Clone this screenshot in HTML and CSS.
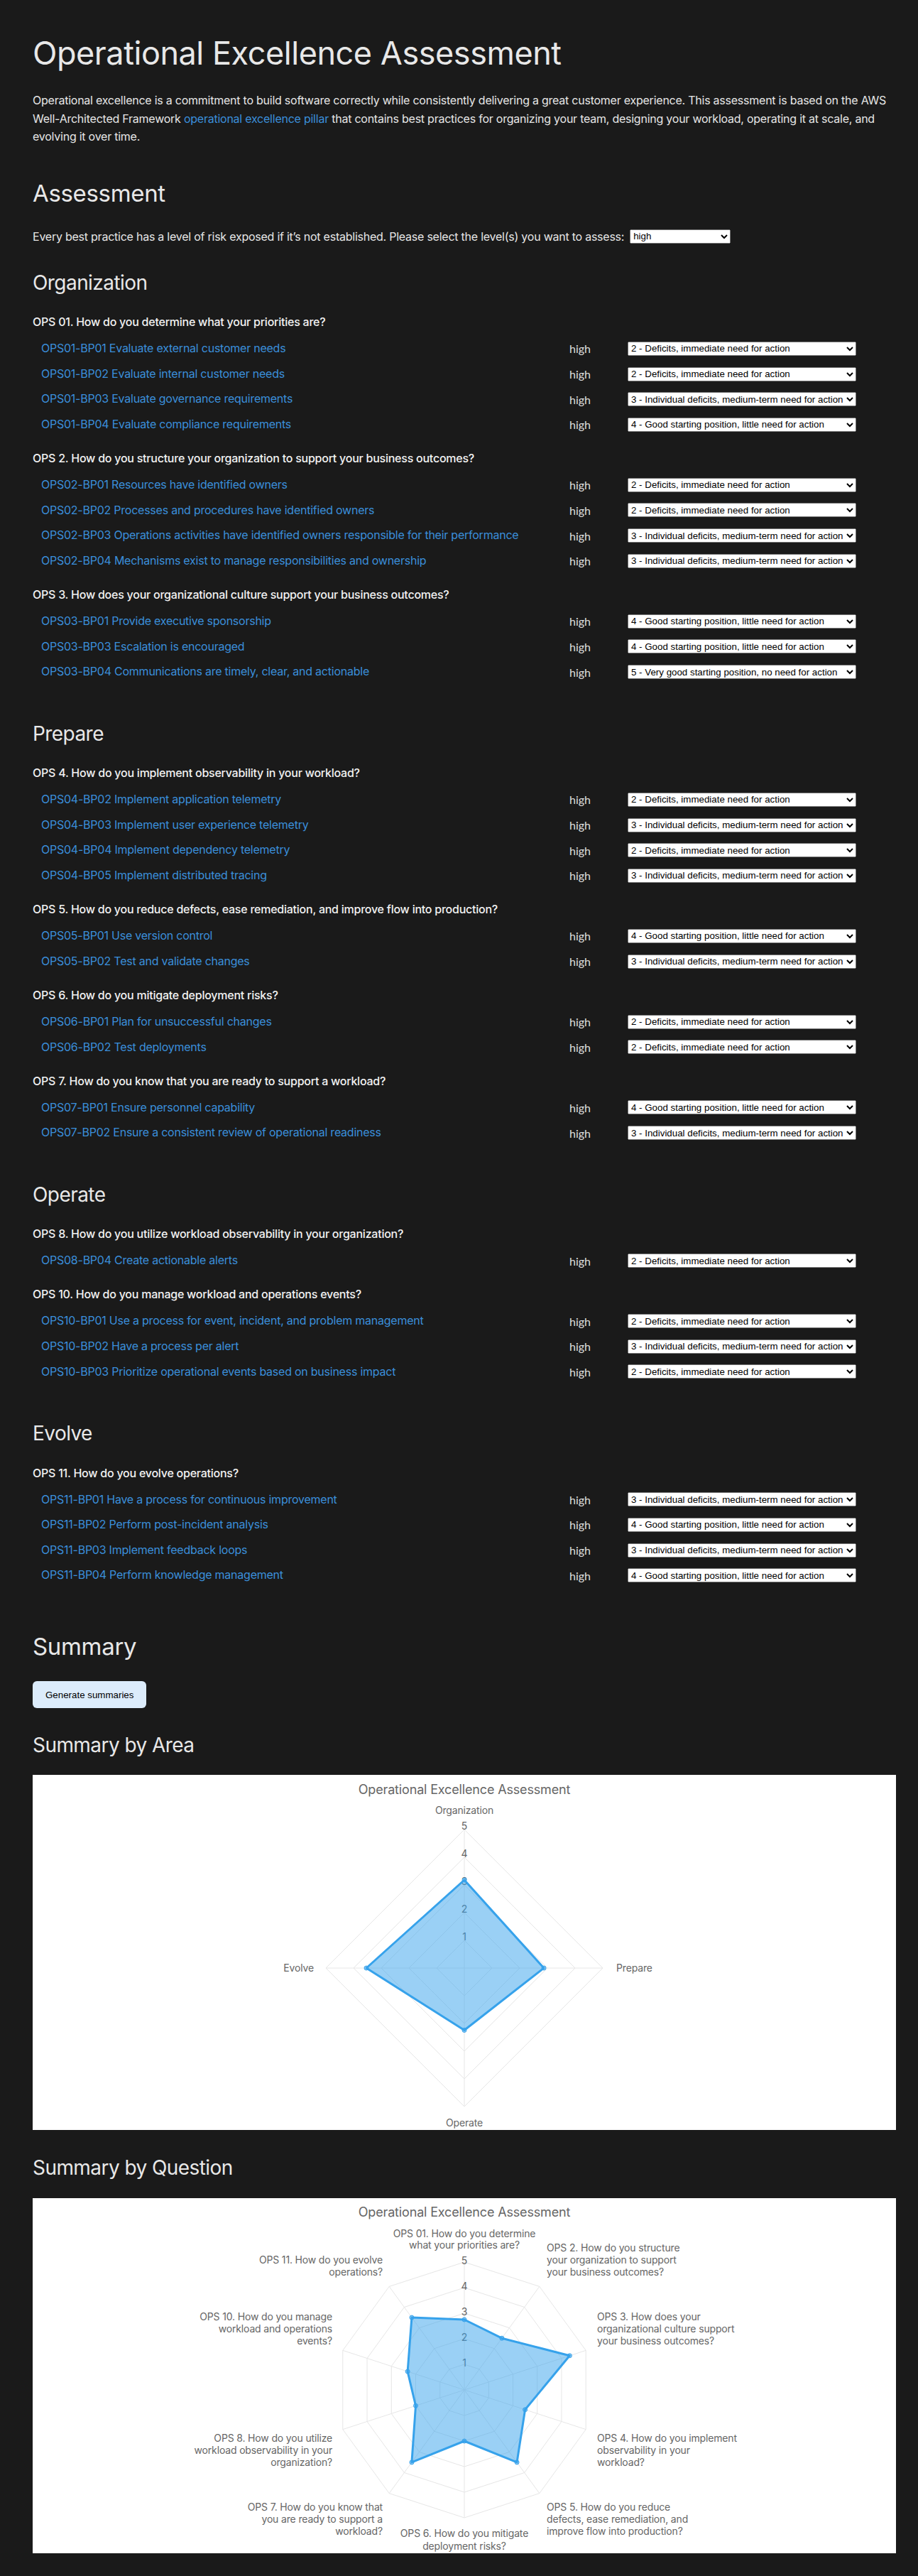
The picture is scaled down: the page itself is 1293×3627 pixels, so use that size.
FILE: index.html
```html
<!DOCTYPE html>
<html lang="en">
<head>
<meta charset="utf-8">
<title>Operational Excellence Assessment</title>
<link rel="stylesheet" href="styles.css">
</head>
<body>
<main class="page">
  <h1 class="title">Operational Excellence Assessment</h1>
  <p class="intro">Operational excellence is a commitment to build software correctly while consistently delivering a great customer experience. This assessment is based on the AWS Well-Architected Framework <a href="#">operational excellence pillar</a> that contains best practices for organizing your team, designing your workload, operating it at scale, and evolving it over time.</p>

  <section class="assessment">
    <h2 class="section-title">Assessment</h2>
    <p class="risk-filter">Every best practice has a level of risk exposed if it’s not established. Please select the level(s) you want to assess: <select class="risk-select"><option selected>high</option><option>medium</option><option>low</option></select></p>

    <section class="area">
      <h3 class="area-title">Organization</h3>
      <div class="question">
        <h4 class="q-title">OPS 01. How do you determine what your priorities are?</h4>
        <div class="bp-row"><a href="#">OPS01-BP01 Evaluate external customer needs</a><span class="risk">high</span><select class="score"><option selected>2 - Deficits, immediate need for action</option><option>3 - Individual deficits, medium-term need for action</option><option>4 - Good starting position, little need for action</option><option>5 - Very good starting position, no need for action</option></select></div>
        <div class="bp-row"><a href="#">OPS01-BP02 Evaluate internal customer needs</a><span class="risk">high</span><select class="score"><option selected>2 - Deficits, immediate need for action</option><option>3 - Individual deficits, medium-term need for action</option><option>4 - Good starting position, little need for action</option><option>5 - Very good starting position, no need for action</option></select></div>
        <div class="bp-row"><a href="#">OPS01-BP03 Evaluate governance requirements</a><span class="risk">high</span><select class="score"><option>2 - Deficits, immediate need for action</option><option selected>3 - Individual deficits, medium-term need for action</option><option>4 - Good starting position, little need for action</option><option>5 - Very good starting position, no need for action</option></select></div>
        <div class="bp-row"><a href="#">OPS01-BP04 Evaluate compliance requirements</a><span class="risk">high</span><select class="score"><option>2 - Deficits, immediate need for action</option><option>3 - Individual deficits, medium-term need for action</option><option selected>4 - Good starting position, little need for action</option><option>5 - Very good starting position, no need for action</option></select></div>
      </div>
      <div class="question">
        <h4 class="q-title">OPS 2. How do you structure your organization to support your business outcomes?</h4>
        <div class="bp-row"><a href="#">OPS02-BP01 Resources have identified owners</a><span class="risk">high</span><select class="score"><option selected>2 - Deficits, immediate need for action</option><option>3 - Individual deficits, medium-term need for action</option><option>4 - Good starting position, little need for action</option><option>5 - Very good starting position, no need for action</option></select></div>
        <div class="bp-row"><a href="#">OPS02-BP02 Processes and procedures have identified owners</a><span class="risk">high</span><select class="score"><option selected>2 - Deficits, immediate need for action</option><option>3 - Individual deficits, medium-term need for action</option><option>4 - Good starting position, little need for action</option><option>5 - Very good starting position, no need for action</option></select></div>
        <div class="bp-row"><a href="#">OPS02-BP03 Operations activities have identified owners responsible for their performance</a><span class="risk">high</span><select class="score"><option>2 - Deficits, immediate need for action</option><option selected>3 - Individual deficits, medium-term need for action</option><option>4 - Good starting position, little need for action</option><option>5 - Very good starting position, no need for action</option></select></div>
        <div class="bp-row"><a href="#">OPS02-BP04 Mechanisms exist to manage responsibilities and ownership</a><span class="risk">high</span><select class="score"><option>2 - Deficits, immediate need for action</option><option selected>3 - Individual deficits, medium-term need for action</option><option>4 - Good starting position, little need for action</option><option>5 - Very good starting position, no need for action</option></select></div>
      </div>
      <div class="question">
        <h4 class="q-title">OPS 3. How does your organizational culture support your business outcomes?</h4>
        <div class="bp-row"><a href="#">OPS03-BP01 Provide executive sponsorship</a><span class="risk">high</span><select class="score"><option>2 - Deficits, immediate need for action</option><option>3 - Individual deficits, medium-term need for action</option><option selected>4 - Good starting position, little need for action</option><option>5 - Very good starting position, no need for action</option></select></div>
        <div class="bp-row"><a href="#">OPS03-BP03 Escalation is encouraged</a><span class="risk">high</span><select class="score"><option>2 - Deficits, immediate need for action</option><option>3 - Individual deficits, medium-term need for action</option><option selected>4 - Good starting position, little need for action</option><option>5 - Very good starting position, no need for action</option></select></div>
        <div class="bp-row"><a href="#">OPS03-BP04 Communications are timely, clear, and actionable</a><span class="risk">high</span><select class="score"><option>2 - Deficits, immediate need for action</option><option>3 - Individual deficits, medium-term need for action</option><option>4 - Good starting position, little need for action</option><option selected>5 - Very good starting position, no need for action</option></select></div>
      </div>
    </section>

    <section class="area">
      <h3 class="area-title">Prepare</h3>
      <div class="question">
        <h4 class="q-title">OPS 4. How do you implement observability in your workload?</h4>
        <div class="bp-row"><a href="#">OPS04-BP02 Implement application telemetry</a><span class="risk">high</span><select class="score"><option selected>2 - Deficits, immediate need for action</option><option>3 - Individual deficits, medium-term need for action</option><option>4 - Good starting position, little need for action</option><option>5 - Very good starting position, no need for action</option></select></div>
        <div class="bp-row"><a href="#">OPS04-BP03 Implement user experience telemetry</a><span class="risk">high</span><select class="score"><option>2 - Deficits, immediate need for action</option><option selected>3 - Individual deficits, medium-term need for action</option><option>4 - Good starting position, little need for action</option><option>5 - Very good starting position, no need for action</option></select></div>
        <div class="bp-row"><a href="#">OPS04-BP04 Implement dependency telemetry</a><span class="risk">high</span><select class="score"><option selected>2 - Deficits, immediate need for action</option><option>3 - Individual deficits, medium-term need for action</option><option>4 - Good starting position, little need for action</option><option>5 - Very good starting position, no need for action</option></select></div>
        <div class="bp-row"><a href="#">OPS04-BP05 Implement distributed tracing</a><span class="risk">high</span><select class="score"><option>2 - Deficits, immediate need for action</option><option selected>3 - Individual deficits, medium-term need for action</option><option>4 - Good starting position, little need for action</option><option>5 - Very good starting position, no need for action</option></select></div>
      </div>
      <div class="question">
        <h4 class="q-title">OPS 5. How do you reduce defects, ease remediation, and improve flow into production?</h4>
        <div class="bp-row"><a href="#">OPS05-BP01 Use version control</a><span class="risk">high</span><select class="score"><option>2 - Deficits, immediate need for action</option><option>3 - Individual deficits, medium-term need for action</option><option selected>4 - Good starting position, little need for action</option><option>5 - Very good starting position, no need for action</option></select></div>
        <div class="bp-row"><a href="#">OPS05-BP02 Test and validate changes</a><span class="risk">high</span><select class="score"><option>2 - Deficits, immediate need for action</option><option selected>3 - Individual deficits, medium-term need for action</option><option>4 - Good starting position, little need for action</option><option>5 - Very good starting position, no need for action</option></select></div>
      </div>
      <div class="question">
        <h4 class="q-title">OPS 6. How do you mitigate deployment risks?</h4>
        <div class="bp-row"><a href="#">OPS06-BP01 Plan for unsuccessful changes</a><span class="risk">high</span><select class="score"><option selected>2 - Deficits, immediate need for action</option><option>3 - Individual deficits, medium-term need for action</option><option>4 - Good starting position, little need for action</option><option>5 - Very good starting position, no need for action</option></select></div>
        <div class="bp-row"><a href="#">OPS06-BP02 Test deployments</a><span class="risk">high</span><select class="score"><option selected>2 - Deficits, immediate need for action</option><option>3 - Individual deficits, medium-term need for action</option><option>4 - Good starting position, little need for action</option><option>5 - Very good starting position, no need for action</option></select></div>
      </div>
      <div class="question">
        <h4 class="q-title">OPS 7. How do you know that you are ready to support a workload?</h4>
        <div class="bp-row"><a href="#">OPS07-BP01 Ensure personnel capability</a><span class="risk">high</span><select class="score"><option>2 - Deficits, immediate need for action</option><option>3 - Individual deficits, medium-term need for action</option><option selected>4 - Good starting position, little need for action</option><option>5 - Very good starting position, no need for action</option></select></div>
        <div class="bp-row"><a href="#">OPS07-BP02 Ensure a consistent review of operational readiness</a><span class="risk">high</span><select class="score"><option>2 - Deficits, immediate need for action</option><option selected>3 - Individual deficits, medium-term need for action</option><option>4 - Good starting position, little need for action</option><option>5 - Very good starting position, no need for action</option></select></div>
      </div>
    </section>

    <section class="area">
      <h3 class="area-title">Operate</h3>
      <div class="question">
        <h4 class="q-title">OPS 8. How do you utilize workload observability in your organization?</h4>
        <div class="bp-row"><a href="#">OPS08-BP04 Create actionable alerts</a><span class="risk">high</span><select class="score"><option selected>2 - Deficits, immediate need for action</option><option>3 - Individual deficits, medium-term need for action</option><option>4 - Good starting position, little need for action</option><option>5 - Very good starting position, no need for action</option></select></div>
      </div>
      <div class="question">
        <h4 class="q-title">OPS 10. How do you manage workload and operations events?</h4>
        <div class="bp-row"><a href="#">OPS10-BP01 Use a process for event, incident, and problem management</a><span class="risk">high</span><select class="score"><option selected>2 - Deficits, immediate need for action</option><option>3 - Individual deficits, medium-term need for action</option><option>4 - Good starting position, little need for action</option><option>5 - Very good starting position, no need for action</option></select></div>
        <div class="bp-row"><a href="#">OPS10-BP02 Have a process per alert</a><span class="risk">high</span><select class="score"><option>2 - Deficits, immediate need for action</option><option selected>3 - Individual deficits, medium-term need for action</option><option>4 - Good starting position, little need for action</option><option>5 - Very good starting position, no need for action</option></select></div>
        <div class="bp-row"><a href="#">OPS10-BP03 Prioritize operational events based on business impact</a><span class="risk">high</span><select class="score"><option selected>2 - Deficits, immediate need for action</option><option>3 - Individual deficits, medium-term need for action</option><option>4 - Good starting position, little need for action</option><option>5 - Very good starting position, no need for action</option></select></div>
      </div>
    </section>

    <section class="area">
      <h3 class="area-title">Evolve</h3>
      <div class="question">
        <h4 class="q-title">OPS 11. How do you evolve operations?</h4>
        <div class="bp-row"><a href="#">OPS11-BP01 Have a process for continuous improvement</a><span class="risk">high</span><select class="score"><option>2 - Deficits, immediate need for action</option><option selected>3 - Individual deficits, medium-term need for action</option><option>4 - Good starting position, little need for action</option><option>5 - Very good starting position, no need for action</option></select></div>
        <div class="bp-row"><a href="#">OPS11-BP02 Perform post-incident analysis</a><span class="risk">high</span><select class="score"><option>2 - Deficits, immediate need for action</option><option>3 - Individual deficits, medium-term need for action</option><option selected>4 - Good starting position, little need for action</option><option>5 - Very good starting position, no need for action</option></select></div>
        <div class="bp-row"><a href="#">OPS11-BP03 Implement feedback loops</a><span class="risk">high</span><select class="score"><option>2 - Deficits, immediate need for action</option><option selected>3 - Individual deficits, medium-term need for action</option><option>4 - Good starting position, little need for action</option><option>5 - Very good starting position, no need for action</option></select></div>
        <div class="bp-row"><a href="#">OPS11-BP04 Perform knowledge management</a><span class="risk">high</span><select class="score"><option>2 - Deficits, immediate need for action</option><option>3 - Individual deficits, medium-term need for action</option><option selected>4 - Good starting position, little need for action</option><option>5 - Very good starting position, no need for action</option></select></div>
      </div>
    </section>
  </section>

  <section class="summary">
    <h2 class="section-title">Summary</h2>
    <button class="generate" type="button">Generate summaries</button>

    <h3 class="area-title">Summary by Area</h3>
    <div class="chart">
      <svg class="radar" viewBox="0 0 1216 500" width="1216" height="500" xmlns="http://www.w3.org/2000/svg">
        <text class="chart-title" x="608" y="26.5" text-anchor="middle">Operational Excellence Assessment</text>
        <g class="grid">
          <polygon points="608,233 647,272 608,311 569,272"/>
          <polygon points="608,194 686,272 608,350 530,272"/>
          <polygon points="608,155 725,272 608,389 491,272"/>
          <polygon points="608,116 764,272 608,428 452,272"/>
          <polygon points="608,77 803,272 608,467 413,272"/>
          <line x1="608" y1="272" x2="608" y2="77"/>
          <line x1="608" y1="272" x2="803" y2="272"/>
          <line x1="608" y1="272" x2="608" y2="467"/>
          <line x1="608" y1="272" x2="413" y2="272"/>
        </g>
        <g class="ticks" text-anchor="middle">
          <text x="608" y="77">5</text>
          <text x="608" y="116">4</text>
          <text x="608" y="155">3</text>
          <text x="608" y="194">2</text>
          <text x="608" y="233">1</text>
        </g>
        <polygon class="data" points="608,148 720,272 608,359.5 470,272"/>
        <g class="pts">
          <circle cx="608" cy="148" r="3"/>
          <circle cx="720" cy="272" r="3"/>
          <circle cx="608" cy="359.5" r="3"/>
          <circle cx="470" cy="272" r="3"/>
        </g>
        <g class="labels">
          <text x="608" y="54.6" text-anchor="middle">Organization</text>
          <text x="822" y="277" text-anchor="start">Prepare</text>
          <text x="608" y="494.7" text-anchor="middle">Operate</text>
          <text x="396" y="277" text-anchor="end">Evolve</text>
        </g>
      </svg>
    </div>

    <h3 class="area-title">Summary by Question</h3>
    <div class="chart">
      <svg class="radar" viewBox="0 0 1216 500" width="1216" height="500" xmlns="http://www.w3.org/2000/svg">
        <text class="chart-title" x="608" y="26.3" text-anchor="middle">Operational Excellence Assessment</text>
        <g class="grid">
          <polygon points="608,234 629.16,240.88 642.24,258.88 642.24,281.12 629.16,299.12 608,306 586.84,299.12 573.76,281.12 573.76,258.88 586.84,240.88"/>
          <polygon points="608,198 650.32,211.75 676.48,247.75 676.48,292.25 650.32,328.25 608,342 565.68,328.25 539.52,292.25 539.52,247.75 565.68,211.75"/>
          <polygon points="608,162 671.48,182.63 710.72,236.63 710.72,303.37 671.48,357.37 608,378 544.52,357.37 505.28,303.37 505.28,236.63 544.52,182.63"/>
          <polygon points="608,126 692.64,153.5 744.96,225.5 744.96,314.5 692.64,386.5 608,414 523.36,386.5 471.04,314.5 471.04,225.5 523.36,153.5"/>
          <polygon points="608,90 713.8,124.38 779.2,214.38 779.2,325.62 713.8,415.62 608,450 502.2,415.62 436.8,325.62 436.8,214.38 502.2,124.38"/>
          <line x1="608" y1="270" x2="608" y2="90"/>
          <line x1="608" y1="270" x2="713.8" y2="124.38"/>
          <line x1="608" y1="270" x2="779.2" y2="214.38"/>
          <line x1="608" y1="270" x2="779.2" y2="325.62"/>
          <line x1="608" y1="270" x2="713.8" y2="415.62"/>
          <line x1="608" y1="270" x2="608" y2="450"/>
          <line x1="608" y1="270" x2="502.2" y2="415.62"/>
          <line x1="608" y1="270" x2="436.8" y2="325.62"/>
          <line x1="608" y1="270" x2="436.8" y2="214.38"/>
          <line x1="608" y1="270" x2="502.2" y2="124.38"/>
        </g>
        <g class="ticks" text-anchor="middle">
          <text x="608" y="93">5</text>
          <text x="608" y="129">4</text>
          <text x="608" y="165">3</text>
          <text x="608" y="201">2</text>
          <text x="608" y="237">1</text>
        </g>
        <polygon class="data" points="608,171 660.9,197.19 756.37,221.8 693.6,297.81 682.06,371.93 608,342 533.94,371.93 539.52,292.25 528.11,244.04 533.94,168.07"/>
        <g class="pts">
          <circle cx="608" cy="171" r="3"/>
          <circle cx="660.9" cy="197.19" r="3"/>
          <circle cx="756.37" cy="221.8" r="3"/>
          <circle cx="693.6" cy="297.81" r="3"/>
          <circle cx="682.06" cy="371.93" r="3"/>
          <circle cx="608" cy="342" r="3"/>
          <circle cx="533.94" cy="371.93" r="3"/>
          <circle cx="539.52" cy="292.25" r="3"/>
          <circle cx="528.11" cy="244.04" r="3"/>
          <circle cx="533.94" cy="168.07" r="3"/>
        </g>
        <g class="labels">
          <text text-anchor="middle"><tspan x="608" y="54.7">OPS 01. How do you determine</tspan><tspan x="608" y="70.9">what your priorities are?</tspan></text>
          <text text-anchor="start"><tspan x="724" y="74.8">OPS 2. How do you structure</tspan><tspan x="724" y="91.8">your organization to support</tspan><tspan x="724" y="108.9">your business outcomes?</tspan></text>
          <text text-anchor="start"><tspan x="795" y="172">OPS 3. How does your</tspan><tspan x="795" y="188.8">organizational culture support</tspan><tspan x="795" y="205.6">your business outcomes?</tspan></text>
          <text text-anchor="start"><tspan x="795" y="342.7">OPS 4. How do you implement</tspan><tspan x="795" y="359.7">observability in your</tspan><tspan x="795" y="376.8">workload?</tspan></text>
          <text text-anchor="start"><tspan x="724" y="440">OPS 5. How do you reduce</tspan><tspan x="724" y="457">defects, ease remediation, and</tspan><tspan x="724" y="474">improve flow into production?</tspan></text>
          <text text-anchor="middle"><tspan x="608" y="477.4">OPS 6. How do you mitigate</tspan><tspan x="608" y="494.5">deployment risks?</tspan></text>
          <text text-anchor="end"><tspan x="493" y="440">OPS 7. How do you know that</tspan><tspan x="493" y="457">you are ready to support a</tspan><tspan x="493" y="474">workload?</tspan></text>
          <text text-anchor="end"><tspan x="422" y="342.7">OPS 8. How do you utilize</tspan><tspan x="422" y="359.7">workload observability in your</tspan><tspan x="422" y="376.8">organization?</tspan></text>
          <text text-anchor="end"><tspan x="422" y="172">OPS 10. How do you manage</tspan><tspan x="422" y="188.8">workload and operations</tspan><tspan x="422" y="205.6">events?</tspan></text>
          <text text-anchor="end"><tspan x="493" y="91.8">OPS 11. How do you evolve</tspan><tspan x="493" y="108.9">operations?</tspan></text>
        </g>
      </svg>
    </div>
  </section>
</main>
</body>
</html>
```

FILE: styles.css
```css
* {
  box-sizing: border-box;
}

html, body {
  margin: 0;
  padding: 0;
}

body {
  background: #1a1a1a;
  color: #e6e6e6;
  font-family: Inter, "Noto Sans", "Liberation Sans", sans-serif;
  font-size: 16px;
  letter-spacing: -0.015em;
}

a {
  color: #3a8fdb;
  text-decoration: none;
}

.page {
  padding: 47px 31px 32px 46px;
}

.title {
  margin: 0 0 26px;
  font-size: 45px;
  line-height: 56px;
  font-weight: 400;
  letter-spacing: -0.01em;
  color: #e8e8e8;
}

.intro {
  margin: 0 0 44.2px;
  font-size: 16px;
  line-height: 25.6px;
}

.section-title {
  margin: 0 0 27px;
  font-size: 33px;
  line-height: 44px;
  font-weight: 400;
  letter-spacing: -0.01em;
  color: #e8e8e8;
}

.risk-filter {
  margin: 0 0 36px;
  height: 24px;
  line-height: 24px;
  display: flex;
  align-items: center;
  gap: 8px;
}

.risk-select {
  width: 142px;
  height: 20px;
  font-family: "Liberation Sans", Arial, sans-serif;
  font-size: 13.33px;
  letter-spacing: normal;
}

.area + .area {
  margin-top: 52.2px;
}

.area-title {
  margin: 0 0 26.2px;
  font-size: 28px;
  line-height: 34px;
  font-weight: 400;
  letter-spacing: -0.02em;
  color: #e8e8e8;
}

.question + .question {
  margin-top: 17.6px;
}

.q-title {
  margin: 0 0 6.4px;
  font-size: 16px;
  line-height: 25.6px;
  font-weight: 500;
  color: #f2f2f2;
}

.bp-row {
  display: grid;
  grid-template-columns: 744px 82px 322px;
  align-items: center;
  height: 35.6px;
  padding-left: 12px;
}

.bp-row a {
  font-size: 16px;
  line-height: 25.6px;
}

.risk {
  font-family: Lato, "Open Sans", sans-serif;
  font-size: 16px;
  letter-spacing: normal;
  color: #dedede;
}

.score {
  width: 322px;
  height: 20px;
  font-family: "Liberation Sans", Arial, sans-serif;
  font-size: 13.33px;
  letter-spacing: normal;
}

.summary {
  margin-top: 60.2px;
}

.generate {
  display: block;
  margin: 0 0 34.5px;
  height: 38px;
  padding: 0 18px;
  border: none;
  border-radius: 6px;
  background: #dcecfb;
  color: #000;
  font-family: "Liberation Sans", Arial, sans-serif;
  font-size: 13.33px;
  letter-spacing: normal;
}

.summary .area-title {
  margin-bottom: 25.5px;
}

.chart {
  background: #fff;
  height: 500px;
  margin-bottom: 36px;
}

.chart:last-child {
  margin-bottom: 0;
}

.radar {
  display: block;
  width: 100%;
  height: 500px;
  font-family: Inter, "Noto Sans", sans-serif;
  letter-spacing: -0.01em;
}

.chart-title {
  font-size: 18px;
  fill: #666;
}

.grid polygon,
.grid line {
  fill: none;
  stroke: #e6e6e6;
  stroke-width: 1;
}

.ticks text {
  font-size: 14px;
  fill: #666;
}

.data {
  fill: rgba(54, 162, 235, 0.5);
  stroke: #36a2eb;
  stroke-width: 3;
  stroke-linejoin: round;
}

.pts circle {
  fill: rgba(54, 162, 235, 0.5);
  stroke: #36a2eb;
  stroke-width: 1;
}

.labels text {
  font-size: 14px;
  fill: #666;
}
```
